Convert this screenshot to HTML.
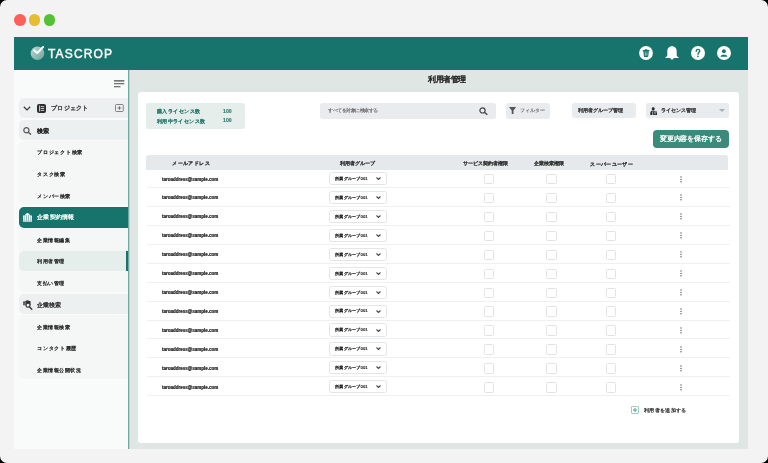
<!DOCTYPE html><html><head><meta charset="utf-8"><style>
html,body{margin:0;padding:0;width:768px;height:463px;overflow:hidden;background:#000;}
body{font-family:"Liberation Sans",sans-serif;}
#win{position:absolute;left:0;top:0;width:768px;height:463px;background:#f3f3f3;border-radius:7px;overflow:hidden;}
.a{position:absolute;}
.dot{position:absolute;width:11.6px;height:11.6px;border-radius:50%;top:14px;}
#hdr{left:14px;top:37px;width:734px;height:32.7px;background:#17746c;}
#side{left:14px;top:69.7px;width:114px;height:379.3px;background:#f9fafa;}
#sideb{left:128px;top:69.7px;width:1px;height:379.3px;background:#6fa9a0;box-shadow:1px 0 0 #b9d4cf;}
#cont{left:130px;top:69.7px;width:618px;height:379.3px;background:#dfe6e4;}
#card{left:138.2px;top:92px;width:600.8px;height:351px;background:#fff;border-radius:3px;}
.t{position:absolute;white-space:nowrap;line-height:1;transform:scale(0.25);transform-origin:0 0;filter:grayscale(0.001);}
.si{position:absolute;left:19px;width:109px;height:20px;border-radius:5px 0 0 5px;}
.sep{position:absolute;left:147px;width:583px;height:1px;background:#eef0f1;}
.cb{position:absolute;width:8.4px;height:8.4px;border:1px solid #e1e3e5;border-radius:1.5px;background:#fff;}
.dd{position:absolute;left:329.4px;width:55.4px;height:11.2px;border:0.6px solid #e3e5e7;border-radius:2.5px;background:#fff;}
</style></head><body><div id="win">
<div class="dot" style="left:14.2px;background:#fe5f57"></div>
<div class="dot" style="left:28.8px;background:#e6bd2f"></div>
<div class="dot" style="left:43.5px;background:#54c134"></div>
<div id="hdr" class="a"></div><div id="side" class="a"></div><div id="sideb" class="a"></div><div id="cont" class="a"></div><div id="card" class="a"></div>
<svg class="a" style="left:29px;top:44px" width="20" height="18" viewBox="0 0 20 18">
<defs><linearGradient id="lg" x1="0" y1="0" x2="1" y2="1"><stop offset="0" stop-color="#bcd8d3"/><stop offset="1" stop-color="#6aa59c"/></linearGradient></defs>
<circle cx="8.5" cy="9.3" r="6.8" fill="url(#lg)"/>
<path d="M5.0 6.3 L8.2 9.0 L14.1 3.0" fill="none" stroke="#fff" stroke-width="2.0" stroke-linecap="round" stroke-linejoin="round"/>
</svg>
<div class="t" style="left:48px;top:47.60px;font-size:48.00px;color:#fff;font-weight:normal;-webkit-text-stroke-width:1.6px;letter-spacing:4.6px;">TASCROP</div>
<svg class="a" style="left:639.4px;top:46.1px" width="14" height="14" viewBox="0 0 14 14"><circle cx="7" cy="7" r="6.9" fill="#fff"/>
<path d="M3.8 4.1h6.6v1.3H3.8z M5.9 3.3h2.4v1H5.9z" fill="#17746c"/><path d="M4.4 5.2h5.4l-0.5 5.1c-0.05 0.4-0.3 0.6-0.7 0.6H5.6c-0.4 0-0.65-0.2-0.7-0.6z" fill="#17746c"/><path d="M6.3 6.4v3.3M7.9 6.4v3.3" stroke="#fff" stroke-width="0.6"/></svg>
<svg class="a" style="left:665.3px;top:46.1px" width="14" height="14" viewBox="0 0 14 14">
<path d="M7 0.3 C3.9 0.3 2.3 2.6 2.3 5.4 V9.2 C2.3 10.3 1.2 10.9 0.3 11.4 V12.0 H13.7 V11.4 C12.8 10.9 11.7 10.3 11.7 9.2 V5.4 C11.7 2.6 10.1 0.3 7 0.3 Z" fill="#fff"/><path d="M5.4 12 A1.6 1.6 0 0 0 8.6 12 Z" fill="#fff"/></svg>
<svg class="a" style="left:690.9px;top:46.1px" width="14" height="14" viewBox="0 0 14 14"><circle cx="7" cy="7" r="7" fill="#fff"/>
<path d="M5.2 5.3 C5.2 4.1 6.0 3.4 7.0 3.4 C8.1 3.4 8.8 4.1 8.8 5.0 C8.8 6.3 7.0 6.5 7.0 8.2" fill="none" stroke="#17746c" stroke-width="1.35" stroke-linecap="round"/><circle cx="7.0" cy="10.3" r="0.85" fill="#17746c"/></svg>
<svg class="a" style="left:717.4px;top:46px" width="14" height="14" viewBox="0 0 14 14"><circle cx="7" cy="7" r="7" fill="#fff"/>
<circle cx="6.9" cy="5.3" r="1.95" fill="#17746c"/><path d="M3.4 10.8 C3.5 9.3 5.1 8.7 6.9 8.7 C8.7 8.7 10.3 9.3 10.4 10.8Z" fill="#17746c"/></svg>
<div class="t" style="left:427.6px;top:75.60px;font-size:30.00px;color:#2a2a2a;font-weight:bold;-webkit-text-stroke-width:0.5px;">利用者管理</div>
<svg class="a" style="left:113px;top:79px" width="12" height="9" viewBox="0 0 12 9"><path d="M1 1.8h10.3M1 4.7h10.3M1 7.7h6.5" stroke="#4a4a4a" stroke-width="1.15"/></svg>
<div class="si" style="top:98px;height:19.6px;background:#edf0f0"></div>
<div class="si" style="top:141px;height:64px;background:#f5f7f7"></div>
<div class="si" style="top:228px;height:64px;background:#f5f7f7"></div>
<div class="si" style="top:315px;height:64px;background:#f5f7f7"></div>
<div class="si" style="top:120.4px;background:#edf0f0"></div>
<svg class="a" style="left:23px;top:106px" width="8" height="5" viewBox="0 0 8 5"><path d="M0.8 0.8 L4 3.9 L7.2 0.8" fill="none" stroke="#3a3a3a" stroke-width="1.2"/></svg>
<svg class="a" style="left:37px;top:103.6px" width="9" height="9" viewBox="0 0 9 9"><rect x="0" y="0" width="9" height="9" rx="2" fill="#2d2d2d"/><path d="M2.6 1.5v6" stroke="#fff" stroke-width="0.8"/><path d="M3.8 2.6h3.4M3.8 4.5h3.4M3.8 6.4h3.4" stroke="#fff" stroke-width="0.75"/></svg>
<div class="t" style="left:51.2px;top:105.30px;font-size:24.20px;color:#4a4a4a;font-weight:bold;-webkit-text-stroke-width:0.5px;">プロジェクト</div>
<svg class="a" style="left:115px;top:104px" width="9" height="8" viewBox="0 0 9 8"><rect x="0.5" y="0.5" width="7.8" height="7" rx="1" fill="none" stroke="#666" stroke-width="0.8"/><path d="M4.4 2.2v3.6M2.6 4h3.6" stroke="#444" stroke-width="0.7"/></svg>
<svg class="a" style="left:23px;top:127px" width="9" height="8" viewBox="0 0 9 8"><circle cx="3.4" cy="3.3" r="2.6" fill="none" stroke="#555" stroke-width="1.2"/><path d="M5.3 5.2 L8 7.6" stroke="#555" stroke-width="1.4"/></svg>
<div class="t" style="left:37.4px;top:127.80px;font-size:24.80px;color:#222;font-weight:bold;-webkit-text-stroke-width:0.5px;">検索</div>
<div class="t" style="left:37.3px;top:149.30px;font-size:21.80px;color:#2e2e2e;font-weight:normal;-webkit-text-stroke-width:1.25px;">プロジェクト検索</div>
<div class="t" style="left:37.3px;top:170.90px;font-size:21.80px;color:#2e2e2e;font-weight:normal;-webkit-text-stroke-width:1.25px;">タスク検索</div>
<div class="t" style="left:37.3px;top:192.60px;font-size:21.80px;color:#2e2e2e;font-weight:normal;-webkit-text-stroke-width:1.25px;">メンバー検索</div>
<div class="si" style="top:207px;height:20.5px;background:#17746c"></div>
<svg class="a" style="left:23.1px;top:213.2px" width="9" height="8.7" viewBox="0 0 9 8.7"><path d="M0 8.7V2.6h2.4V1.0L4.5 0 6.6 1.0V2.6H9V8.7Z" fill="#fff"/><path d="M1.2 3.4v4.2M3.5 2.2v5.4M5.5 2.2v5.4M7.8 3.4v4.2" stroke="#17746c" stroke-width="0.5"/><path d="M0 7.9h9" stroke="#17746c" stroke-width="0.35"/></svg>
<div class="t" style="left:37.3px;top:214.30px;font-size:25.20px;color:#fff;font-weight:normal;-webkit-text-stroke-width:1.0px;">企業契約情報</div>
<div class="t" style="left:37.3px;top:236.50px;font-size:21.80px;color:#2e2e2e;font-weight:normal;-webkit-text-stroke-width:1.25px;">企業情報編集</div>
<div class="si" style="top:250.9px;height:19.9px;background:#e5eeeb"></div>
<div class="a" style="left:126.3px;top:250.9px;width:2.2px;height:19.9px;background:#17746c"></div>
<div class="t" style="left:37.3px;top:258.10px;font-size:21.80px;color:#2e2e2e;font-weight:normal;-webkit-text-stroke-width:1.25px;">利用者管理</div>
<div class="t" style="left:37.3px;top:279.70px;font-size:21.80px;color:#2e2e2e;font-weight:normal;-webkit-text-stroke-width:1.25px;">支払い管理</div>
<div class="si" style="top:294px;background:#edf0f0"></div>
<svg class="a" style="left:23px;top:299.8px" width="10" height="10" viewBox="0 0 10 10"><path d="M0.2 6.0V1.6h2.2V0.9L4.3 0.2 7.6 1.3V5.2H0.2Z" fill="#333"/><path d="M1.2 2.3v3.2M2.6 2.0v3.2" stroke="#edf0f0" stroke-width="0.4"/><circle cx="5.0" cy="5.3" r="2.0" fill="#edf0f0" stroke="#333" stroke-width="1.05"/><path d="M6.4 6.8 L8.8 9.2" stroke="#333" stroke-width="1.3" stroke-linecap="round"/></svg>
<div class="t" style="left:37.3px;top:301.80px;font-size:24.20px;color:#2a2a2a;font-weight:normal;-webkit-text-stroke-width:1.2px;">企業検索</div>
<div class="t" style="left:37.3px;top:323.60px;font-size:21.80px;color:#2e2e2e;font-weight:normal;-webkit-text-stroke-width:1.25px;">企業情報検索</div>
<div class="t" style="left:37.3px;top:345.20px;font-size:21.80px;color:#2e2e2e;font-weight:normal;-webkit-text-stroke-width:1.25px;">コンタクト履歴</div>
<div class="t" style="left:37.3px;top:366.90px;font-size:21.80px;color:#2e2e2e;font-weight:normal;-webkit-text-stroke-width:1.25px;">企業情報公開状況</div>
<div class="a" style="left:145.9px;top:102.6px;width:98.8px;height:26.5px;background:#e6eeec;border-radius:2px"></div>
<div class="t" style="left:156.7px;top:108.70px;font-size:21.40px;color:#2f7d72;font-weight:bold;-webkit-text-stroke-width:0.5px;">購入ライセンス数</div>
<div class="t" style="left:223.4px;top:109.20px;font-size:20.80px;color:#2f7d72;font-weight:bold;-webkit-text-stroke-width:0.6px;">100</div>
<div class="t" style="left:156.7px;top:117.60px;font-size:21.20px;color:#2f7d72;font-weight:bold;-webkit-text-stroke-width:0.5px;">利用中ライセンス数</div>
<div class="t" style="left:223.4px;top:118.30px;font-size:20.80px;color:#2f7d72;font-weight:bold;-webkit-text-stroke-width:0.6px;">100</div>
<div class="a" style="left:320.2px;top:102.9px;width:175.6px;height:15.7px;background:#e9ecee;border-radius:2.5px"></div>
<div class="t" style="left:328px;top:108.00px;font-size:18.00px;color:#666;font-weight:normal;-webkit-text-stroke-width:0.6px;">すべてを対象に検索する</div>
<svg class="a" style="left:478.5px;top:106.8px" width="9" height="8.2" viewBox="0 0 9 8.2"><circle cx="3.5" cy="3.4" r="2.6" fill="none" stroke="#444" stroke-width="1.2"/><path d="M5.4 5.3 L8.3 7.8" stroke="#444" stroke-width="1.4"/></svg>
<div class="a" style="left:505.6px;top:102.9px;width:44.2px;height:15.7px;background:#e9ecee;border-radius:2.5px"></div>
<svg class="a" style="left:508.8px;top:106.5px" width="7.2" height="7.8" viewBox="0 0 7.2 7.8"><path d="M0 0h7.2L4.5 3.6v4.2L2.7 6.8V3.6Z" fill="#555"/></svg>
<div class="t" style="left:519.9px;top:107.80px;font-size:20.00px;color:#777;font-weight:normal;-webkit-text-stroke-width:0.8px;">フィルター</div>
<div class="a" style="left:572.2px;top:102.9px;width:63.5px;height:15.5px;background:#e9ecee;border-radius:2.5px"></div>
<div class="t" style="left:578.3px;top:108.20px;font-size:20.20px;color:#3a3a3a;font-weight:bold;-webkit-text-stroke-width:0.3px;">利用者グループ管理</div>
<div class="a" style="left:645.7px;top:102.7px;width:83.6px;height:15.6px;background:#e9ecee;border-radius:2.5px"></div>
<svg class="a" style="left:649.8px;top:106.7px" width="7.6" height="8" viewBox="0 0 7.6 8">
<circle cx="3.2" cy="1.7" r="1.5" fill="#2a2a2a"/><path d="M0.3 6.2 C0.3 4.2 1.6 3.5 3.2 3.5 C4.2 3.5 4.8 3.7 5.2 4.0 V4.6 H2.4 V7.9 H0.3Z" fill="#2a2a2a"/>
<rect x="2.9" y="4.6" width="4.5" height="3.3" rx="0.4" fill="#2a2a2a"/><path d="M3.7 5.6h2.9M3.7 6.8h2.2" stroke="#e9ecee" stroke-width="0.5"/></svg>
<div class="t" style="left:660.7px;top:108.40px;font-size:20.40px;color:#3a3a3a;font-weight:bold;-webkit-text-stroke-width:0.3px;">ライセンス管理</div>
<svg class="a" style="left:719px;top:109px" width="6" height="3" viewBox="0 0 6 3"><path d="M0 0h6L3 3Z" fill="#aab0b3"/></svg>
<div class="a" style="left:653.4px;top:130.1px;width:75.3px;height:17.7px;background:#3b8a7b;border-radius:4px"></div>
<div class="t" style="left:660px;top:135.00px;font-size:27.40px;color:#fff;font-weight:normal;-webkit-text-stroke-width:1.3px;">変更内容を保存する</div>
<div class="a" style="left:145.9px;top:155.2px;width:582.6px;height:15px;background:#e6e9eb;border-radius:2.5px 2.5px 0 0"></div>
<div class="t" style="left:172px;top:161.30px;font-size:20.80px;color:#333;font-weight:bold;-webkit-text-stroke-width:0.5px;">メールアドレス</div>
<div class="t" style="left:339.5px;top:161.20px;font-size:20.00px;color:#333;font-weight:bold;-webkit-text-stroke-width:0.5px;">利用者グループ</div>
<div class="t" style="left:462.5px;top:161.00px;font-size:20.40px;color:#333;font-weight:bold;-webkit-text-stroke-width:0.4px;">サービス契約者権限</div>
<div class="t" style="left:533.9px;top:161.20px;font-size:20.00px;color:#333;font-weight:bold;-webkit-text-stroke-width:0.4px;">企業検索権限</div>
<div class="t" style="left:589.8px;top:161.00px;font-size:21.20px;color:#333;font-weight:bold;-webkit-text-stroke-width:0.4px;">スーパーユーザー</div>
<div class="sep" style="top:187.10px"></div>
<div class="t" style="left:161.6px;top:176.50px;font-size:18.00px;color:#1e1e1e;font-weight:bold;-webkit-text-stroke-width:0.9px;">taroaddress@sample.com</div>
<div class="dd" style="top:172.10px"></div>
<div class="t" style="left:335px;top:176.00px;font-size:17.40px;color:#2a2a2a;font-weight:bold;-webkit-text-stroke-width:0.3px;">所属グループ001</div>
<svg class="a" style="left:376.4px;top:177.20px" width="5" height="3" viewBox="0 0 5 3"><path d="M0.5 0.5L2.5 2.5L4.5 0.5" fill="none" stroke="#4a4a4a" stroke-width="1.1"/></svg>
<div class="cb" style="left:483.9px;top:174.00px"></div>
<div class="cb" style="left:546.4px;top:174.00px"></div>
<div class="cb" style="left:605.7px;top:174.00px"></div>
<svg class="a" style="left:680px;top:175.50px" width="2" height="7" viewBox="0 0 2 7"><circle cx="1" cy="1" r="0.7" fill="#555"/><circle cx="1" cy="3.4" r="0.7" fill="#555"/><circle cx="1" cy="5.8" r="0.7" fill="#555"/></svg>
<div class="sep" style="top:206.02px"></div>
<div class="t" style="left:161.6px;top:195.42px;font-size:18.00px;color:#1e1e1e;font-weight:bold;-webkit-text-stroke-width:0.9px;">taroaddress@sample.com</div>
<div class="dd" style="top:191.02px"></div>
<div class="t" style="left:335px;top:194.92px;font-size:17.40px;color:#2a2a2a;font-weight:bold;-webkit-text-stroke-width:0.3px;">所属グループ001</div>
<svg class="a" style="left:376.4px;top:196.12px" width="5" height="3" viewBox="0 0 5 3"><path d="M0.5 0.5L2.5 2.5L4.5 0.5" fill="none" stroke="#4a4a4a" stroke-width="1.1"/></svg>
<div class="cb" style="left:483.9px;top:192.92px"></div>
<div class="cb" style="left:546.4px;top:192.92px"></div>
<div class="cb" style="left:605.7px;top:192.92px"></div>
<svg class="a" style="left:680px;top:194.42px" width="2" height="7" viewBox="0 0 2 7"><circle cx="1" cy="1" r="0.7" fill="#555"/><circle cx="1" cy="3.4" r="0.7" fill="#555"/><circle cx="1" cy="5.8" r="0.7" fill="#555"/></svg>
<div class="sep" style="top:224.94px"></div>
<div class="t" style="left:161.6px;top:214.34px;font-size:18.00px;color:#1e1e1e;font-weight:bold;-webkit-text-stroke-width:0.9px;">taroaddress@sample.com</div>
<div class="dd" style="top:209.94px"></div>
<div class="t" style="left:335px;top:213.84px;font-size:17.40px;color:#2a2a2a;font-weight:bold;-webkit-text-stroke-width:0.3px;">所属グループ001</div>
<svg class="a" style="left:376.4px;top:215.04px" width="5" height="3" viewBox="0 0 5 3"><path d="M0.5 0.5L2.5 2.5L4.5 0.5" fill="none" stroke="#4a4a4a" stroke-width="1.1"/></svg>
<div class="cb" style="left:483.9px;top:211.84px"></div>
<div class="cb" style="left:546.4px;top:211.84px"></div>
<div class="cb" style="left:605.7px;top:211.84px"></div>
<svg class="a" style="left:680px;top:213.34px" width="2" height="7" viewBox="0 0 2 7"><circle cx="1" cy="1" r="0.7" fill="#555"/><circle cx="1" cy="3.4" r="0.7" fill="#555"/><circle cx="1" cy="5.8" r="0.7" fill="#555"/></svg>
<div class="sep" style="top:243.86px"></div>
<div class="t" style="left:161.6px;top:233.26px;font-size:18.00px;color:#1e1e1e;font-weight:bold;-webkit-text-stroke-width:0.9px;">taroaddress@sample.com</div>
<div class="dd" style="top:228.86px"></div>
<div class="t" style="left:335px;top:232.76px;font-size:17.40px;color:#2a2a2a;font-weight:bold;-webkit-text-stroke-width:0.3px;">所属グループ001</div>
<svg class="a" style="left:376.4px;top:233.96px" width="5" height="3" viewBox="0 0 5 3"><path d="M0.5 0.5L2.5 2.5L4.5 0.5" fill="none" stroke="#4a4a4a" stroke-width="1.1"/></svg>
<div class="cb" style="left:483.9px;top:230.76px"></div>
<div class="cb" style="left:546.4px;top:230.76px"></div>
<div class="cb" style="left:605.7px;top:230.76px"></div>
<svg class="a" style="left:680px;top:232.26px" width="2" height="7" viewBox="0 0 2 7"><circle cx="1" cy="1" r="0.7" fill="#555"/><circle cx="1" cy="3.4" r="0.7" fill="#555"/><circle cx="1" cy="5.8" r="0.7" fill="#555"/></svg>
<div class="sep" style="top:262.78px"></div>
<div class="t" style="left:161.6px;top:252.18px;font-size:18.00px;color:#1e1e1e;font-weight:bold;-webkit-text-stroke-width:0.9px;">taroaddress@sample.com</div>
<div class="dd" style="top:247.78px"></div>
<div class="t" style="left:335px;top:251.68px;font-size:17.40px;color:#2a2a2a;font-weight:bold;-webkit-text-stroke-width:0.3px;">所属グループ001</div>
<svg class="a" style="left:376.4px;top:252.88px" width="5" height="3" viewBox="0 0 5 3"><path d="M0.5 0.5L2.5 2.5L4.5 0.5" fill="none" stroke="#4a4a4a" stroke-width="1.1"/></svg>
<div class="cb" style="left:483.9px;top:249.68px"></div>
<div class="cb" style="left:546.4px;top:249.68px"></div>
<div class="cb" style="left:605.7px;top:249.68px"></div>
<svg class="a" style="left:680px;top:251.18px" width="2" height="7" viewBox="0 0 2 7"><circle cx="1" cy="1" r="0.7" fill="#555"/><circle cx="1" cy="3.4" r="0.7" fill="#555"/><circle cx="1" cy="5.8" r="0.7" fill="#555"/></svg>
<div class="sep" style="top:281.70px"></div>
<div class="t" style="left:161.6px;top:271.10px;font-size:18.00px;color:#1e1e1e;font-weight:bold;-webkit-text-stroke-width:0.9px;">taroaddress@sample.com</div>
<div class="dd" style="top:266.70px"></div>
<div class="t" style="left:335px;top:270.60px;font-size:17.40px;color:#2a2a2a;font-weight:bold;-webkit-text-stroke-width:0.3px;">所属グループ001</div>
<svg class="a" style="left:376.4px;top:271.80px" width="5" height="3" viewBox="0 0 5 3"><path d="M0.5 0.5L2.5 2.5L4.5 0.5" fill="none" stroke="#4a4a4a" stroke-width="1.1"/></svg>
<div class="cb" style="left:483.9px;top:268.60px"></div>
<div class="cb" style="left:546.4px;top:268.60px"></div>
<div class="cb" style="left:605.7px;top:268.60px"></div>
<svg class="a" style="left:680px;top:270.10px" width="2" height="7" viewBox="0 0 2 7"><circle cx="1" cy="1" r="0.7" fill="#555"/><circle cx="1" cy="3.4" r="0.7" fill="#555"/><circle cx="1" cy="5.8" r="0.7" fill="#555"/></svg>
<div class="sep" style="top:300.62px"></div>
<div class="t" style="left:161.6px;top:290.02px;font-size:18.00px;color:#1e1e1e;font-weight:bold;-webkit-text-stroke-width:0.9px;">taroaddress@sample.com</div>
<div class="dd" style="top:285.62px"></div>
<div class="t" style="left:335px;top:289.52px;font-size:17.40px;color:#2a2a2a;font-weight:bold;-webkit-text-stroke-width:0.3px;">所属グループ001</div>
<svg class="a" style="left:376.4px;top:290.72px" width="5" height="3" viewBox="0 0 5 3"><path d="M0.5 0.5L2.5 2.5L4.5 0.5" fill="none" stroke="#4a4a4a" stroke-width="1.1"/></svg>
<div class="cb" style="left:483.9px;top:287.52px"></div>
<div class="cb" style="left:546.4px;top:287.52px"></div>
<div class="cb" style="left:605.7px;top:287.52px"></div>
<svg class="a" style="left:680px;top:289.02px" width="2" height="7" viewBox="0 0 2 7"><circle cx="1" cy="1" r="0.7" fill="#555"/><circle cx="1" cy="3.4" r="0.7" fill="#555"/><circle cx="1" cy="5.8" r="0.7" fill="#555"/></svg>
<div class="sep" style="top:319.54px"></div>
<div class="t" style="left:161.6px;top:308.94px;font-size:18.00px;color:#1e1e1e;font-weight:bold;-webkit-text-stroke-width:0.9px;">taroaddress@sample.com</div>
<div class="dd" style="top:304.54px"></div>
<div class="t" style="left:335px;top:308.44px;font-size:17.40px;color:#2a2a2a;font-weight:bold;-webkit-text-stroke-width:0.3px;">所属グループ001</div>
<svg class="a" style="left:376.4px;top:309.64px" width="5" height="3" viewBox="0 0 5 3"><path d="M0.5 0.5L2.5 2.5L4.5 0.5" fill="none" stroke="#4a4a4a" stroke-width="1.1"/></svg>
<div class="cb" style="left:483.9px;top:306.44px"></div>
<div class="cb" style="left:546.4px;top:306.44px"></div>
<div class="cb" style="left:605.7px;top:306.44px"></div>
<svg class="a" style="left:680px;top:307.94px" width="2" height="7" viewBox="0 0 2 7"><circle cx="1" cy="1" r="0.7" fill="#555"/><circle cx="1" cy="3.4" r="0.7" fill="#555"/><circle cx="1" cy="5.8" r="0.7" fill="#555"/></svg>
<div class="sep" style="top:338.46px"></div>
<div class="t" style="left:161.6px;top:327.86px;font-size:18.00px;color:#1e1e1e;font-weight:bold;-webkit-text-stroke-width:0.9px;">taroaddress@sample.com</div>
<div class="dd" style="top:323.46px"></div>
<div class="t" style="left:335px;top:327.36px;font-size:17.40px;color:#2a2a2a;font-weight:bold;-webkit-text-stroke-width:0.3px;">所属グループ001</div>
<svg class="a" style="left:376.4px;top:328.56px" width="5" height="3" viewBox="0 0 5 3"><path d="M0.5 0.5L2.5 2.5L4.5 0.5" fill="none" stroke="#4a4a4a" stroke-width="1.1"/></svg>
<div class="cb" style="left:483.9px;top:325.36px"></div>
<div class="cb" style="left:546.4px;top:325.36px"></div>
<div class="cb" style="left:605.7px;top:325.36px"></div>
<svg class="a" style="left:680px;top:326.86px" width="2" height="7" viewBox="0 0 2 7"><circle cx="1" cy="1" r="0.7" fill="#555"/><circle cx="1" cy="3.4" r="0.7" fill="#555"/><circle cx="1" cy="5.8" r="0.7" fill="#555"/></svg>
<div class="sep" style="top:357.38px"></div>
<div class="t" style="left:161.6px;top:346.78px;font-size:18.00px;color:#1e1e1e;font-weight:bold;-webkit-text-stroke-width:0.9px;">taroaddress@sample.com</div>
<div class="dd" style="top:342.38px"></div>
<div class="t" style="left:335px;top:346.28px;font-size:17.40px;color:#2a2a2a;font-weight:bold;-webkit-text-stroke-width:0.3px;">所属グループ001</div>
<svg class="a" style="left:376.4px;top:347.48px" width="5" height="3" viewBox="0 0 5 3"><path d="M0.5 0.5L2.5 2.5L4.5 0.5" fill="none" stroke="#4a4a4a" stroke-width="1.1"/></svg>
<div class="cb" style="left:483.9px;top:344.28px"></div>
<div class="cb" style="left:546.4px;top:344.28px"></div>
<div class="cb" style="left:605.7px;top:344.28px"></div>
<svg class="a" style="left:680px;top:345.78px" width="2" height="7" viewBox="0 0 2 7"><circle cx="1" cy="1" r="0.7" fill="#555"/><circle cx="1" cy="3.4" r="0.7" fill="#555"/><circle cx="1" cy="5.8" r="0.7" fill="#555"/></svg>
<div class="sep" style="top:376.30px"></div>
<div class="t" style="left:161.6px;top:365.70px;font-size:18.00px;color:#1e1e1e;font-weight:bold;-webkit-text-stroke-width:0.9px;">taroaddress@sample.com</div>
<div class="dd" style="top:361.30px"></div>
<div class="t" style="left:335px;top:365.20px;font-size:17.40px;color:#2a2a2a;font-weight:bold;-webkit-text-stroke-width:0.3px;">所属グループ001</div>
<svg class="a" style="left:376.4px;top:366.40px" width="5" height="3" viewBox="0 0 5 3"><path d="M0.5 0.5L2.5 2.5L4.5 0.5" fill="none" stroke="#4a4a4a" stroke-width="1.1"/></svg>
<div class="cb" style="left:483.9px;top:363.20px"></div>
<div class="cb" style="left:546.4px;top:363.20px"></div>
<div class="cb" style="left:605.7px;top:363.20px"></div>
<svg class="a" style="left:680px;top:364.70px" width="2" height="7" viewBox="0 0 2 7"><circle cx="1" cy="1" r="0.7" fill="#555"/><circle cx="1" cy="3.4" r="0.7" fill="#555"/><circle cx="1" cy="5.8" r="0.7" fill="#555"/></svg>
<div class="sep" style="top:395.22px"></div>
<div class="t" style="left:161.6px;top:384.62px;font-size:18.00px;color:#1e1e1e;font-weight:bold;-webkit-text-stroke-width:0.9px;">taroaddress@sample.com</div>
<div class="dd" style="top:380.22px"></div>
<div class="t" style="left:335px;top:384.12px;font-size:17.40px;color:#2a2a2a;font-weight:bold;-webkit-text-stroke-width:0.3px;">所属グループ001</div>
<svg class="a" style="left:376.4px;top:385.32px" width="5" height="3" viewBox="0 0 5 3"><path d="M0.5 0.5L2.5 2.5L4.5 0.5" fill="none" stroke="#4a4a4a" stroke-width="1.1"/></svg>
<div class="cb" style="left:483.9px;top:382.12px"></div>
<div class="cb" style="left:546.4px;top:382.12px"></div>
<div class="cb" style="left:605.7px;top:382.12px"></div>
<svg class="a" style="left:680px;top:383.62px" width="2" height="7" viewBox="0 0 2 7"><circle cx="1" cy="1" r="0.7" fill="#555"/><circle cx="1" cy="3.4" r="0.7" fill="#555"/><circle cx="1" cy="5.8" r="0.7" fill="#555"/></svg>
<div class="a" style="left:630.9px;top:406.2px;width:6.2px;height:6.0px;border:1px solid #9fcdc5;border-radius:1px"></div>
<svg class="a" style="left:631px;top:406px" width="8" height="8" viewBox="0 0 8 8"><path d="M4 2v4M2 4h4" stroke="#4f9f90" stroke-width="1"/></svg>
<div class="t" style="left:643.6px;top:407.20px;font-size:21.00px;color:#333;font-weight:normal;-webkit-text-stroke-width:1.0px;">利用者を追加する</div>
</div></body></html>
